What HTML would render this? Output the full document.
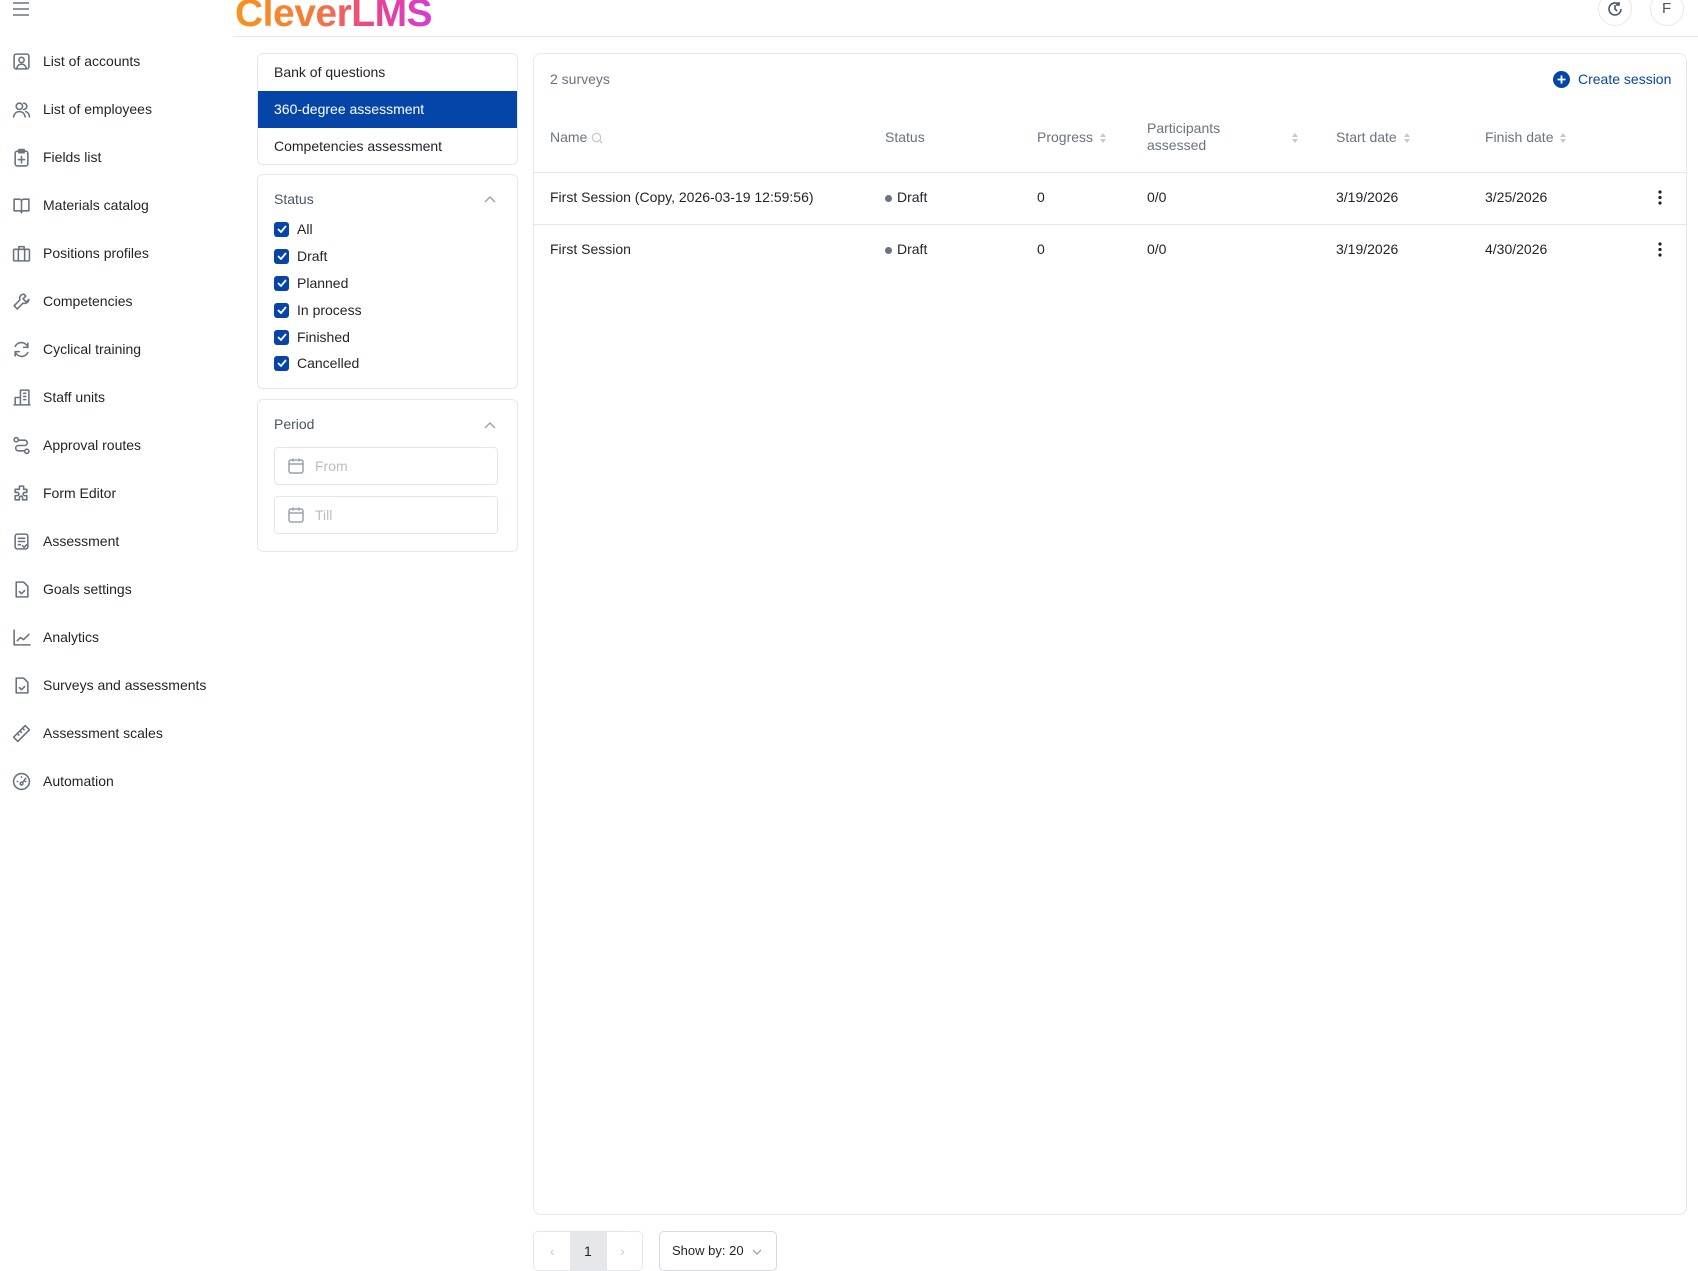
<!DOCTYPE html>
<html><head><meta charset="utf-8"><style>
*{box-sizing:border-box;margin:0;padding:0}
body{width:1698px;height:1255px;overflow:hidden;background:#fff;font-family:"Liberation Sans",sans-serif;font-size:14px;color:#1f2329;position:relative}
.a{position:absolute}
.nav{position:absolute;left:12px;display:flex;align-items:center;height:24px;margin-top:-12px;color:#1f2329;font-size:14px}
.nav svg{width:19px;height:19px;margin-right:12px;stroke:#6b7280;fill:none;stroke-width:1.5;stroke-linecap:round;stroke-linejoin:round}
.card{position:absolute;border:1px solid #e6e8ec;border-radius:6px;background:#fff}
.cb{position:absolute;left:274px;display:flex;align-items:center;height:20px;margin-top:-10px;font-size:14px}
.cb i{width:15px;height:15px;background:#0645a8;border-radius:3px;margin-right:8px;display:flex;align-items:center;justify-content:center}
.th{position:absolute;color:#6b7280;font-size:14px;transform:translateY(-50%);font-weight:500}
.td{position:absolute;transform:translateY(-50%);font-size:14px}
.sort{display:inline-block;width:8px;height:12px;vertical-align:middle;margin-left:6px}
.inp{position:absolute;left:274px;width:224px;height:38px;border:1px solid #e3e6ea;border-radius:4px;color:#b8bec8;display:flex;align-items:center;padding-left:12px}
</style></head><body>

<svg class="a" style="left:12px;top:2px" width="18" height="14" viewBox="0 0 18 14"><path d="M1 1h16M1 7h16M1 13h16" stroke="#6b7280" stroke-width="1.6"/></svg>
<div class="a" style="left:235px;top:-8px;font-size:39px;font-weight:bold;letter-spacing:-0.5px;background:linear-gradient(90deg,#f7941d 0%,#f47b3b 40%,#e9448b 70%,#d63bd6 100%);-webkit-background-clip:text;background-clip:text;color:transparent">CleverLMS</div>
<div class="a" style="left:233px;top:36px;width:1465px;height:1px;background:#e6e8ec"></div>
<div class="a" style="left:1598px;top:-8px;width:34px;height:34px;border:1px solid #e6e8ec;border-radius:50%"></div>
<svg class="a" style="left:1606px;top:0" width="18" height="18" viewBox="0 0 18 18" fill="none" stroke="#4b5563" stroke-width="1.6"><path d="M15 9a6 6 0 1 1-2-4.5"/><path d="M9 5v4l2 2"/><path d="M13 2v3h-3"/></svg>
<div class="a" style="left:1650px;top:-8px;width:34px;height:34px;border:1px solid #e6e8ec;border-radius:50%"></div>
<div class="a" style="left:1662px;top:0;font-size:15px;color:#4b5563">F</div>

<div class="nav" style="top:61px"><svg viewBox="0 0 18 18"><rect x="2" y="2" width="14" height="14" rx="2"/><circle cx="9" cy="7.5" r="2.5"/><path d="M4.5 15c1-2.5 2.5-3.5 4.5-3.5s3.5 1 4.5 3.5"/></svg>List of accounts</div>
<div class="nav" style="top:109px"><svg viewBox="0 0 18 18"><circle cx="7" cy="6" r="3"/><path d="M1.5 16c.5-3 2.5-5 5.5-5s5 2 5.5 5"/><path d="M11 3a3 3 0 0 1 0 6M13 11c2 .5 3.5 2.5 3.5 5"/></svg>List of employees</div>
<div class="nav" style="top:157px"><svg viewBox="0 0 18 18"><rect x="3" y="3" width="12" height="14" rx="2"/><path d="M6.5 1.5h5v3h-5zM9 8v6M6 11h6"/></svg>Fields list</div>
<div class="nav" style="top:205px"><svg viewBox="0 0 18 18"><path d="M2 3h5a2 2 0 0 1 2 2v11a2 2 0 0 0-2-2H2zM16 3h-5a2 2 0 0 0-2 2v11a2 2 0 0 1 2-2h5z"/></svg>Materials catalog</div>
<div class="nav" style="top:253px"><svg viewBox="0 0 18 18"><rect x="1.5" y="5" width="15" height="11" rx="1"/><path d="M6.5 5V2.5h5V5M6 5v11M12 5v11"/></svg>Positions profiles</div>
<div class="nav" style="top:301px"><svg viewBox="0 0 18 18"><path d="M11 2a4 4 0 0 0-3.5 5.5L2 13l3 3 5.5-5.5A4 4 0 0 0 16 7l-2.5 2.5-3-3L13 4a4 4 0 0 0-2-2z"/></svg>Competencies</div>
<div class="nav" style="top:349px"><svg viewBox="0 0 18 18"><path d="M15 7a6.5 6.5 0 0 0-12-1M3 11a6.5 6.5 0 0 0 12 1M15 3v4h-4M3 15v-4h4"/></svg>Cyclical training</div>
<div class="nav" style="top:397px"><svg viewBox="0 0 18 18"><path d="M2 16h15M3 16V9h5v7M8 16V2h8v14M11 5h2M11 8h2M11 11h2"/></svg>Staff units</div>
<div class="nav" style="top:445px"><svg viewBox="0 0 18 18"><circle cx="4" cy="3.5" r="2"/><circle cx="14" cy="14.5" r="2"/><path d="M7 4h5a2.5 2.5 0 0 1 0 5H6a2.5 2.5 0 0 0 0 5h5"/></svg>Approval routes</div>
<div class="nav" style="top:493px"><svg viewBox="0 0 18 18"><path d="M7 2h4v3h3v3h-2a1.5 1.5 0 0 0 0 3h2v4h-4v-2a1.5 1.5 0 0 0-3 0v2H3v-4h2a1.5 1.5 0 0 0 0-3H3V5h4z"/></svg>Form Editor</div>
<div class="nav" style="top:541px"><svg viewBox="0 0 18 18"><rect x="3" y="2" width="12" height="14" rx="2"/><path d="M6 6h6M6 9h6M6 12h2M10 13l1.5 1.5L14 12"/></svg>Assessment</div>
<div class="nav" style="top:589px"><svg viewBox="0 0 18 18"><path d="M4 2h7l4 4v10H4z"/><path d="M7 11l2 2 3-3"/></svg>Goals settings</div>
<div class="nav" style="top:637px"><svg viewBox="0 0 18 18"><path d="M2 2v14h15M5 12l3-3 3 2 5-5"/></svg>Analytics</div>
<div class="nav" style="top:685px"><svg viewBox="0 0 18 18"><path d="M4 2h7l4 4v10H4z"/><path d="M7 11l2 2 3-3"/></svg>Surveys and assessments</div>
<div class="nav" style="top:733px"><svg viewBox="0 0 18 18"><path d="M1.5 12.5L12.5 1.5l4 4-11 11zM5 9l1.5 1.5M7.5 6.5L9 8M10 4l1.5 1.5"/></svg>Assessment scales</div>
<div class="nav" style="top:781px"><svg viewBox="0 0 18 18"><circle cx="9" cy="9" r="7.5"/><circle cx="9" cy="11" r="1.3"/><path d="M10 10l3-4M5 9h.5M9 4.5v.5M12.5 9h.5"/></svg>Automation</div>

<div class="card" style="left:257px;top:53px;width:261px;height:112px;overflow:hidden">
 <div class="a" style="left:16px;top:10px">Bank of questions</div>
 <div class="a" style="left:0;top:37px;width:259px;height:37px;background:#0645a8;color:#fff;padding:10px 16px">360-degree assessment</div>
 <div class="a" style="left:16px;top:84px">Competencies assessment</div>
</div>

<div class="card" style="left:257px;top:174px;width:261px;height:215px"></div>
<div class="a" style="left:274px;top:191px;color:#4b5563;font-weight:500">Status</div>
<svg class="a" style="left:484px;top:195px" width="12" height="8" viewBox="0 0 12 8"><path d="M1 7l5-5 5 5" fill="none" stroke="#9ca3af" stroke-width="1.5"/></svg>
<div class="cb" style="top:229px"><i><svg width="10" height="8" viewBox="0 0 10 8"><path d="M1 4l3 3 5-6" fill="none" stroke="#fff" stroke-width="1.8"/></svg></i>All</div>
<div class="cb" style="top:256px"><i><svg width="10" height="8" viewBox="0 0 10 8"><path d="M1 4l3 3 5-6" fill="none" stroke="#fff" stroke-width="1.8"/></svg></i>Draft</div>
<div class="cb" style="top:283px"><i><svg width="10" height="8" viewBox="0 0 10 8"><path d="M1 4l3 3 5-6" fill="none" stroke="#fff" stroke-width="1.8"/></svg></i>Planned</div>
<div class="cb" style="top:310px"><i><svg width="10" height="8" viewBox="0 0 10 8"><path d="M1 4l3 3 5-6" fill="none" stroke="#fff" stroke-width="1.8"/></svg></i>In process</div>
<div class="cb" style="top:337px"><i><svg width="10" height="8" viewBox="0 0 10 8"><path d="M1 4l3 3 5-6" fill="none" stroke="#fff" stroke-width="1.8"/></svg></i>Finished</div>
<div class="cb" style="top:363px"><i><svg width="10" height="8" viewBox="0 0 10 8"><path d="M1 4l3 3 5-6" fill="none" stroke="#fff" stroke-width="1.8"/></svg></i>Cancelled</div>

<div class="card" style="left:257px;top:399px;width:261px;height:153px"></div>
<div class="a" style="left:274px;top:416px;color:#4b5563;font-weight:500">Period</div>
<svg class="a" style="left:484px;top:421px" width="12" height="8" viewBox="0 0 12 8"><path d="M1 7l5-5 5 5" fill="none" stroke="#9ca3af" stroke-width="1.5"/></svg>
<div class="inp" style="top:447px"><svg width="18" height="18" viewBox="0 0 18 18" fill="none" stroke="#9ca3af" stroke-width="1.5" style="margin-right:10px"><rect x="2" y="3" width="14" height="13" rx="2"/><path d="M2 7h14M6 1.5v3M12 1.5v3"/></svg>From</div>
<div class="inp" style="top:496px"><svg width="18" height="18" viewBox="0 0 18 18" fill="none" stroke="#9ca3af" stroke-width="1.5" style="margin-right:10px"><rect x="2" y="3" width="14" height="13" rx="2"/><path d="M2 7h14M6 1.5v3M12 1.5v3"/></svg>Till</div>

<div class="card" style="left:533px;top:53px;width:1154px;height:1162px;border-radius:8px"></div>
<div class="td" style="left:550px;top:79px;color:#6b7280">2 surveys</div>
<svg class="a" style="left:1553px;top:71px" width="17" height="17" viewBox="0 0 17 17"><circle cx="8.5" cy="8.5" r="8.5" fill="#0645a8"/><path d="M8.5 4.5v8M4.5 8.5h8" stroke="#fff" stroke-width="1.8"/></svg>
<div class="td" style="left:1578px;top:79px;color:#0645a8">Create session</div>

<div class="th" style="left:550px;top:137px">Name <svg width="12" height="12" viewBox="0 0 12 12" style="vertical-align:middle"><circle cx="5.5" cy="5.5" r="4.2" fill="none" stroke="#c4c9d1" stroke-width="1.3"/><path d="M8.5 8.5l2.5 2.5" stroke="#c4c9d1" stroke-width="1.3"/></svg></div>
<div class="th" style="left:885px;top:137px">Status</div>
<div class="th" style="left:1037px;top:137px">Progress<svg class="sort" viewBox="0 0 8 12"><path d="M4 1l3 4H1zM4 11L1 7h6z" fill="#c4c9d1"/></svg></div>
<div class="th" style="left:1147px;top:137px;line-height:17px">Participants<br>assessed</div>
<svg class="a" style="left:1291px;top:132px" width="8" height="12" viewBox="0 0 8 12"><path d="M4 1l3 4H1zM4 11L1 7h6z" fill="#c4c9d1"/></svg>
<div class="th" style="left:1336px;top:137px">Start date<svg class="sort" viewBox="0 0 8 12"><path d="M4 1l3 4H1zM4 11L1 7h6z" fill="#c4c9d1"/></svg></div>
<div class="th" style="left:1485px;top:137px">Finish date<svg class="sort" viewBox="0 0 8 12"><path d="M4 1l3 4H1zM4 11L1 7h6z" fill="#c4c9d1"/></svg></div>
<div class="a" style="left:534px;top:172px;width:1152px;height:1px;background:#e6e8ec"></div>

<div class="td" style="left:550px;top:197px">First Session (Copy, 2026-03-19 12:59:56)</div>
<div class="td" style="left:885px;top:197px"><span style="display:inline-block;width:7px;height:7px;border-radius:50%;background:#6b7280;margin-right:5px;vertical-align:middle"></span>Draft</div>
<div class="td" style="left:1037px;top:197px">0</div>
<div class="td" style="left:1147px;top:197px">0/0</div>
<div class="td" style="left:1336px;top:197px">3/19/2026</div>
<div class="td" style="left:1485px;top:197px">3/25/2026</div>
<svg class="a" style="left:1658px;top:190px" width="4" height="15" viewBox="0 0 4 15"><circle cx="2" cy="2" r="1.6" fill="#1f2329"/><circle cx="2" cy="7.5" r="1.6" fill="#1f2329"/><circle cx="2" cy="13" r="1.6" fill="#1f2329"/></svg>
<div class="a" style="left:534px;top:224px;width:1152px;height:1px;background:#e6e8ec"></div>

<div class="td" style="left:550px;top:249px">First Session</div>
<div class="td" style="left:885px;top:249px"><span style="display:inline-block;width:7px;height:7px;border-radius:50%;background:#6b7280;margin-right:5px;vertical-align:middle"></span>Draft</div>
<div class="td" style="left:1037px;top:249px">0</div>
<div class="td" style="left:1147px;top:249px">0/0</div>
<div class="td" style="left:1336px;top:249px">3/19/2026</div>
<div class="td" style="left:1485px;top:249px">4/30/2026</div>
<svg class="a" style="left:1658px;top:242px" width="4" height="15" viewBox="0 0 4 15"><circle cx="2" cy="2" r="1.6" fill="#1f2329"/><circle cx="2" cy="7.5" r="1.6" fill="#1f2329"/><circle cx="2" cy="13" r="1.6" fill="#1f2329"/></svg>

<div class="a" style="left:533px;top:1231px;width:110px;height:40px;border:1px solid #e3e6ea;border-radius:5px;overflow:hidden">
 <div class="a" style="left:36px;top:0;width:37px;height:40px;background:#e5e7eb"></div>
 <div class="a" style="left:16px;top:11px;color:#c4c9d1">‹</div>
 <div class="a" style="left:50px;top:11px">1</div>
 <div class="a" style="left:86px;top:11px;color:#c4c9d1">›</div>
</div>
<div class="a" style="left:659px;top:1231px;width:118px;height:40px;border:1px solid #d6d9de;border-radius:5px;padding:11px 12px;font-size:13px;white-space:nowrap">Show by: 20<svg width="10" height="6" viewBox="0 0 10 6" style="margin-left:8px;vertical-align:middle"><path d="M1 1l4 4 4-4" fill="none" stroke="#9ca3af" stroke-width="1.3"/></svg></div>
</body></html>
